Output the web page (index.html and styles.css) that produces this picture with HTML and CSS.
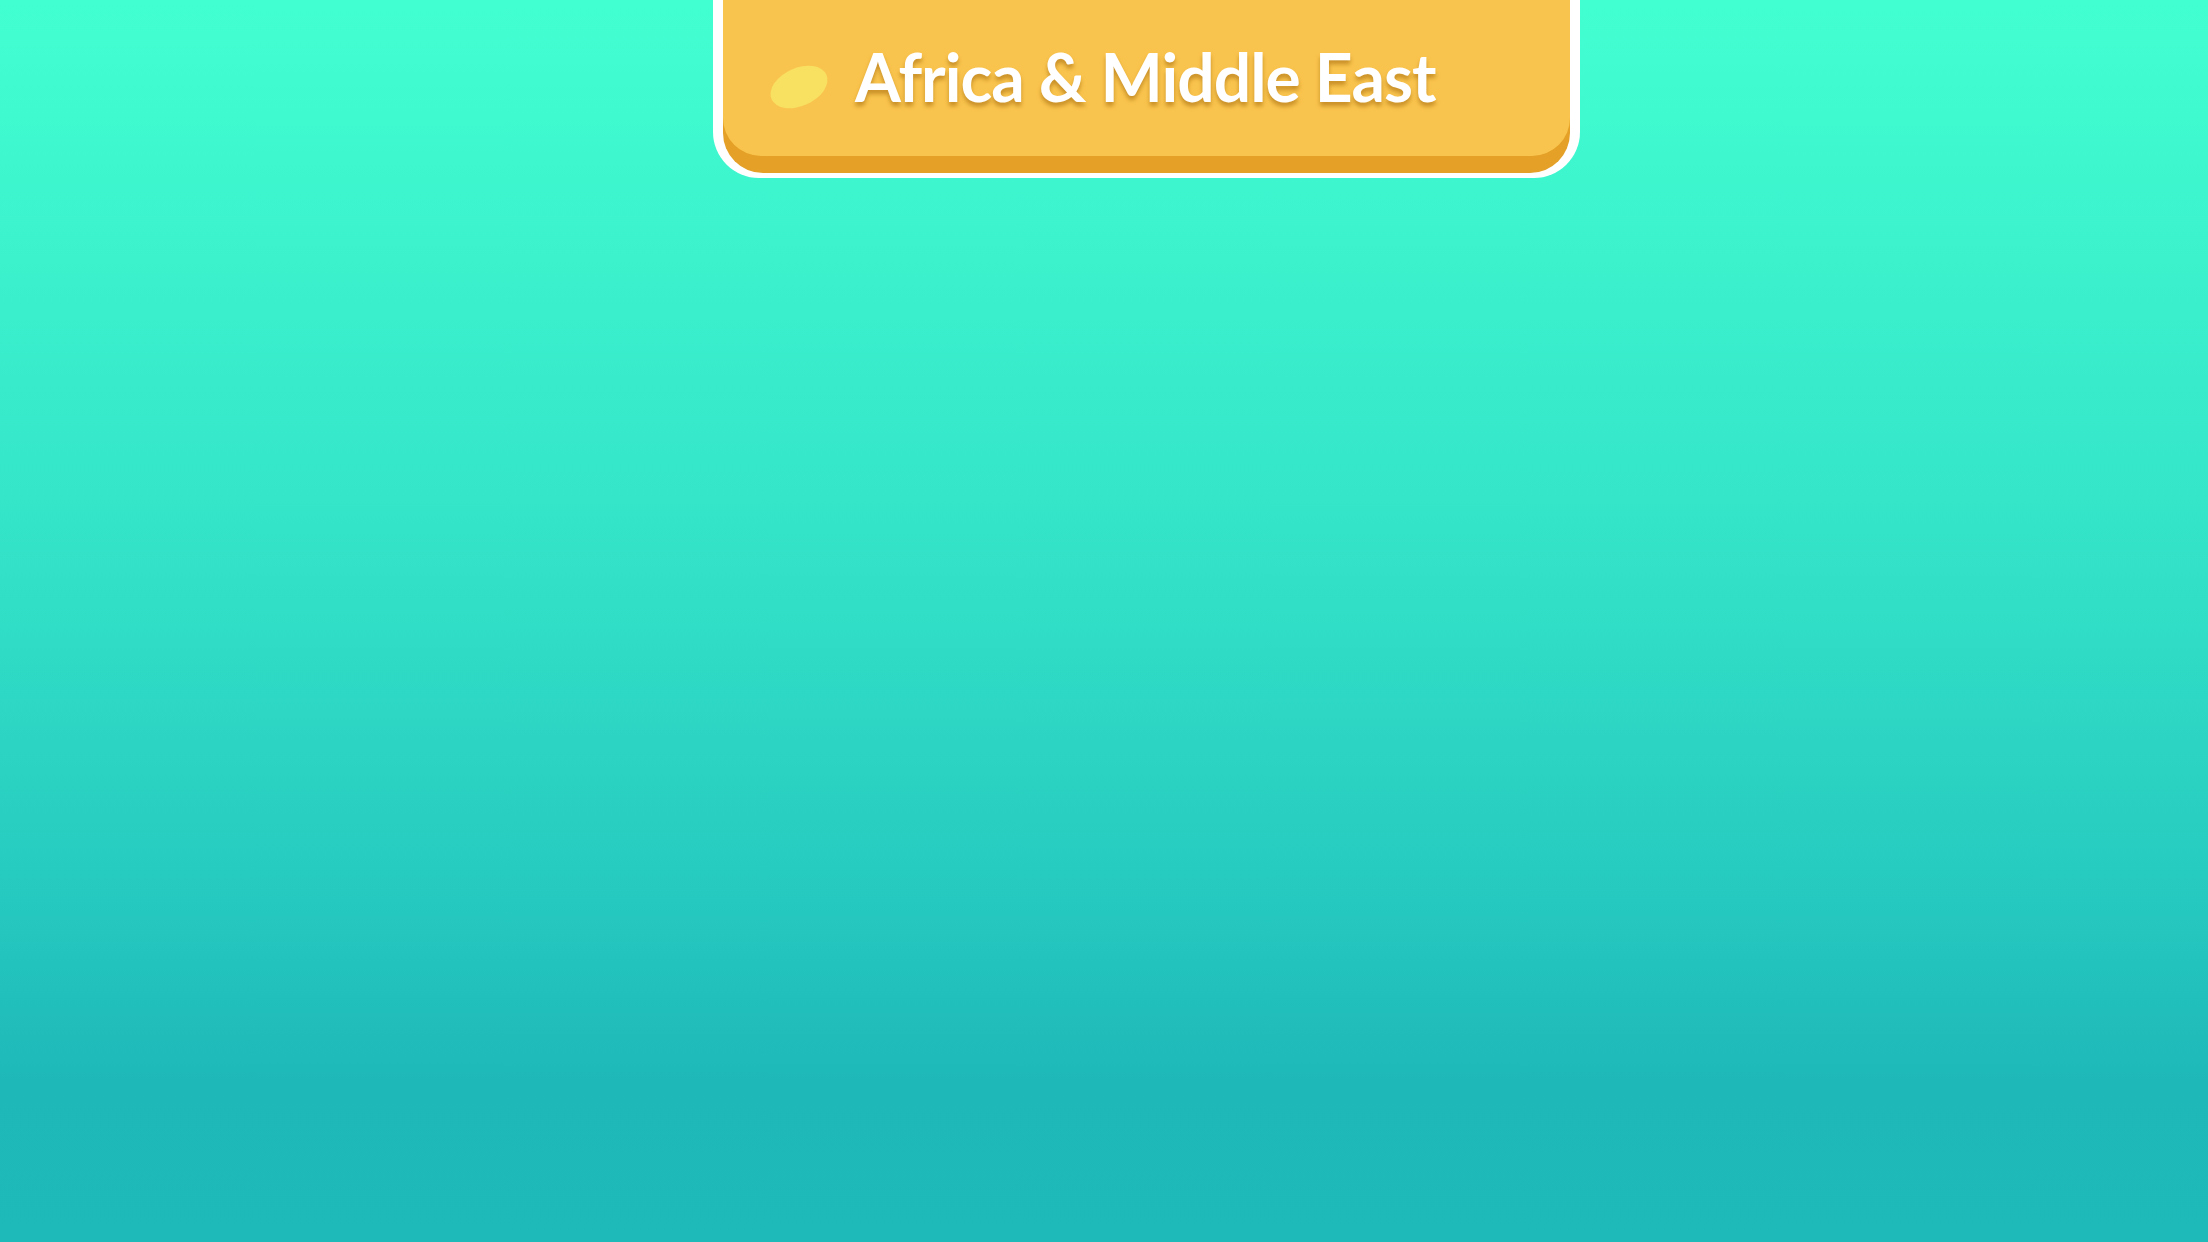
FILE: index.html
```html
<!DOCTYPE html>
<html>
<head>
<meta charset="utf-8">
<link rel="stylesheet" href="styles.css">
</head>
<body>
<div class="stage">
  <div class="banner">
    <div class="base">
      <div class="face">
        <span class="blob"></span>
        <h1 class="title">Africa &amp; Middle East</h1>
      </div>
    </div>
  </div>
</div>
</body>
</html>
```
FILE: styles.css
```css
html, body {
  margin: 0;
  padding: 0;
  width: 2208px;
  height: 1242px;
  overflow: hidden;
}
body {
  background: linear-gradient(180deg, #42ffd1 0%, #35e6c9 40%, #27ccc0 70%, #1eb8b9 87%, #1eb9b9 100%);
  font-family: "Lato", "Open Sans", sans-serif;
}
.stage {
  display: flex;
  padding-left: 713px;
}
.banner {
  width: 867px;
  height: 178px;
  box-sizing: border-box;
  background: #ffffff;
  padding: 0 10px 5px 10px;
  border-radius: 0 0 46px 46px;
}
.base {
  height: 173px;
  background: #e4a027;
  border-radius: 0 0 40px 40px;
}
.face {
  height: 156px;
  background: #f9c44d;
  border-radius: 0 0 38px 38px;
  display: flex;
  align-items: flex-start;
  padding-left: 46px;
  box-sizing: border-box;
}
.blob {
  width: 60px;
  height: 38px;
  margin-top: 68px;
  border-radius: 50%;
  background: #f8e060;
  transform: rotate(-24deg);
  flex: none;
}
.title {
  margin: 44px 0 0 26px;
  font-size: 66px;
  font-weight: 700;
  color: #ffffff;
  letter-spacing: -1px;
  line-height: 1;
  text-shadow: 0 4px 4px rgba(160, 100, 10, 0.55);
}
```
